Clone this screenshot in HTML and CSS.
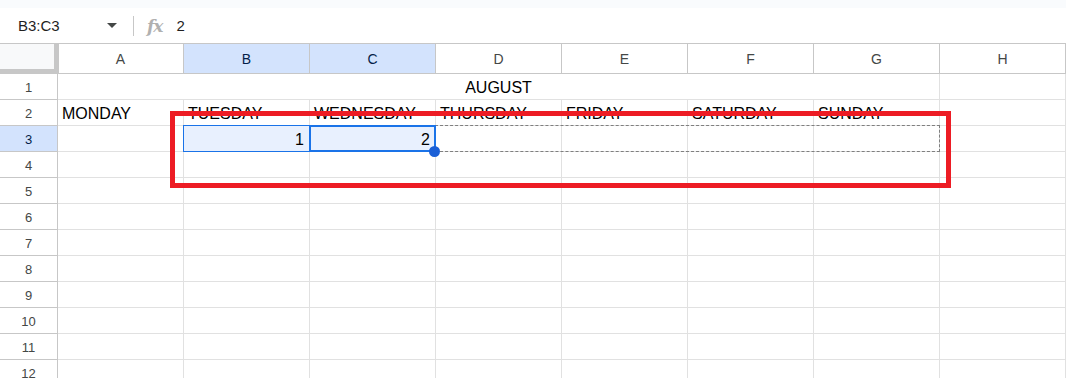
FILE: index.html
```html
<!DOCTYPE html>
<html lang="en">
<head>
    <meta charset="UTF-8">
    <title>August calendar - Sheet</title>
    <link rel="stylesheet" href="styles.css">
</head>
<body>
    <div class="topbar"></div>

    <div class="formula-bar">
        <div class="name-box">
            <span>B3:C3</span>
            <span class="caret"></span>
        </div>
        <div class="divider"></div>
        <span class="fx">fx</span>
        <span class="formula">2</span>
    </div>

    <div class="sheet">
        <!-- header row -->
        <div class="corner"></div>
        <div class="col-head">A</div>
        <div class="col-head picked">B</div>
        <div class="col-head picked">C</div>
        <div class="col-head">D</div>
        <div class="col-head">E</div>
        <div class="col-head">F</div>
        <div class="col-head">G</div>
        <div class="col-head">H</div>

        <!-- row 1 -->
        <div class="row-head">1</div>
        <div class="cell merged">AUGUST</div>
        <div class="cell"></div>

        <!-- row 2 -->
        <div class="row-head">2</div>
        <div class="cell">MONDAY</div>
        <div class="cell">TUESDAY</div>
        <div class="cell">WEDNESDAY</div>
        <div class="cell">THURSDAY</div>
        <div class="cell">FRIDAY</div>
        <div class="cell">SATURDAY</div>
        <div class="cell">SUNDAY</div>
        <div class="cell"></div>

        <!-- row 3 -->
        <div class="row-head picked">3</div>
        <div class="cell"></div>
        <div class="cell num sel">1</div>
        <div class="cell num sel">2</div>
        <div class="cell"></div>
        <div class="cell"></div>
        <div class="cell"></div>
        <div class="cell"></div>
        <div class="cell"></div>

        <div class="row-head">4</div>
        <div class="cell"></div><div class="cell"></div><div class="cell"></div><div class="cell"></div>
        <div class="cell"></div><div class="cell"></div><div class="cell"></div><div class="cell"></div>

        <div class="row-head">5</div>
        <div class="cell"></div><div class="cell"></div><div class="cell"></div><div class="cell"></div>
        <div class="cell"></div><div class="cell"></div><div class="cell"></div><div class="cell"></div>

        <div class="row-head">6</div>
        <div class="cell"></div><div class="cell"></div><div class="cell"></div><div class="cell"></div>
        <div class="cell"></div><div class="cell"></div><div class="cell"></div><div class="cell"></div>

        <div class="row-head">7</div>
        <div class="cell"></div><div class="cell"></div><div class="cell"></div><div class="cell"></div>
        <div class="cell"></div><div class="cell"></div><div class="cell"></div><div class="cell"></div>

        <div class="row-head">8</div>
        <div class="cell"></div><div class="cell"></div><div class="cell"></div><div class="cell"></div>
        <div class="cell"></div><div class="cell"></div><div class="cell"></div><div class="cell"></div>

        <div class="row-head">9</div>
        <div class="cell"></div><div class="cell"></div><div class="cell"></div><div class="cell"></div>
        <div class="cell"></div><div class="cell"></div><div class="cell"></div><div class="cell"></div>

        <div class="row-head">10</div>
        <div class="cell"></div><div class="cell"></div><div class="cell"></div><div class="cell"></div>
        <div class="cell"></div><div class="cell"></div><div class="cell"></div><div class="cell"></div>

        <div class="row-head">11</div>
        <div class="cell"></div><div class="cell"></div><div class="cell"></div><div class="cell"></div>
        <div class="cell"></div><div class="cell"></div><div class="cell"></div><div class="cell"></div>

        <div class="row-head">12</div>
        <div class="cell"></div><div class="cell"></div><div class="cell"></div><div class="cell"></div>
        <div class="cell"></div><div class="cell"></div><div class="cell"></div><div class="cell"></div>

        <!-- selection overlays -->
        <div class="fill-preview"></div>
        <div class="range"></div>
        <div class="active"></div>
        <div class="handle"></div>
    </div>

    <div class="annotation"></div>
</body>
</html>
```

FILE: styles.css
```css
html, body {
    margin: 0;
    padding: 0;
}
body {
    position: relative;
    font-family: "Liberation Sans", Arial, sans-serif;
    background: #fff;
    color: #000;
    width: 1066px;
    height: 378px;
    overflow: hidden;
}
.topbar {
    height: 8px;
    background: #f9fbfd;
}
.formula-bar {
    display: flex;
    align-items: center;
    height: 35px;
    border-bottom: 1px solid #c7c7c7;
}
.name-box {
    box-sizing: border-box;
    width: 125px;
    padding: 0 8px 0 18px;
    display: flex;
    align-items: center;
    justify-content: space-between;
    font-size: 15px;
    color: #1f1f1f;
}
.caret {
    width: 0;
    height: 0;
    border-left: 5px solid transparent;
    border-right: 5px solid transparent;
    border-top: 5px solid #444746;
}
.divider {
    width: 1px;
    height: 20px;
    margin-left: 8px;
    background: #c7c7c7;
}
.fx {
    margin-left: 13px;
    font-family: "DejaVu Serif", serif;
    font-style: italic;
    font-weight: bold;
    font-size: 17px;
    color: #b0b0b0;
    letter-spacing: -1px;
}
.formula {
    margin-left: 14px;
    font-size: 15px;
    color: #1f1f1f;
}
.sheet {
    position: relative;
    display: grid;
    grid-template-columns: 58px repeat(8, 126px);
    grid-template-rows: 30px;
    grid-auto-rows: 26px;
}
.corner {
    box-sizing: border-box;
    background: #f8f9fa;
    border-right: 4px solid #c7c7c7;
    border-bottom: 5px solid #c7c7c7;
    box-shadow: 1px 0 0 #c7c7c7;
}
.col-head, .row-head {
    box-sizing: border-box;
    display: flex;
    align-items: center;
    justify-content: center;
    color: #444746;
    border-right: 1px solid #c7c7c7;
    border-bottom: 1px solid #c7c7c7;
}
.col-head {
    font-size: 14px;
    padding-top: 1px;
}
.row-head {
    font-size: 13px;
    padding-top: 2px;
}
.col-head.picked, .row-head.picked {
    background: #d3e3fd;
    color: #041e49;
}
.cell {
    box-sizing: border-box;
    display: flex;
    align-items: center;
    padding: 2px 4px 0;
    font-size: 16px;
    white-space: nowrap;
    border-right: 1px solid #e1e1e1;
    border-bottom: 1px solid #e1e1e1;
}
.merged {
    grid-column: span 7;
    justify-content: center;
}
.num {
    justify-content: flex-end;
    padding-right: 5px;
}
.sel {
    background: #e8f0fe;
}
.fill-preview {
    position: absolute;
    left: 435px;
    top: 81px;
    width: 505px;
    height: 27px;
    box-sizing: border-box;
    border: 1px dashed #7f7f7f;
}
.range {
    position: absolute;
    left: 183px;
    top: 81px;
    width: 253px;
    height: 27px;
    box-sizing: border-box;
    border: 1px solid #1a73e8;
}
.active {
    position: absolute;
    left: 309px;
    top: 81px;
    width: 127px;
    height: 27px;
    box-sizing: border-box;
    border: 2px solid #1a73e8;
}
.handle {
    position: absolute;
    left: 429px;
    top: 102px;
    width: 11px;
    height: 11px;
    border-radius: 50%;
    background: #1a5fd6;
}
.annotation {
    position: absolute;
    left: 170px;
    top: 111px;
    width: 781px;
    height: 77px;
    box-sizing: border-box;
    border: 5px solid #ed1c24;
}
```
